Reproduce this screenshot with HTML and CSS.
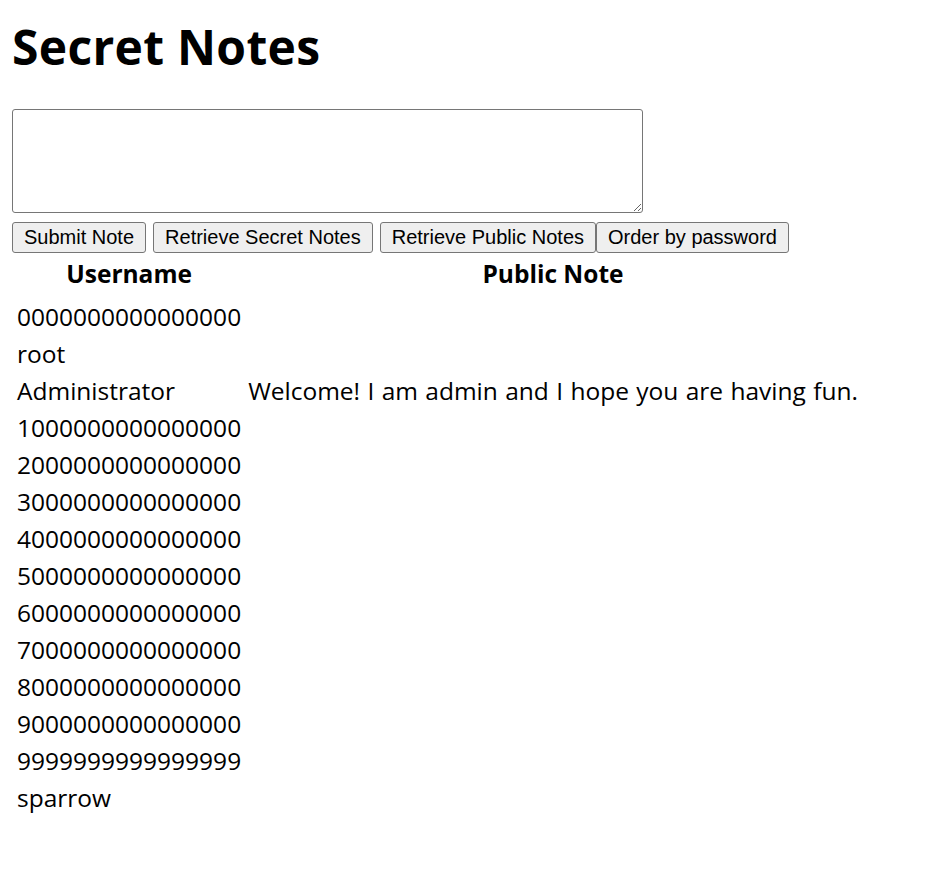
FILE: index.html
```html
<!DOCTYPE html>
<html>
<head>
<meta charset="utf-8">
<title>Secret Notes</title>
<link rel="stylesheet" href="styles.css">
</head>
<body>
<h1 class="title">Secret Notes</h1>
<textarea class="note-input"></textarea>
<div class="actions">
  <button class="btn btn-gap">Submit Note</button>
  <button class="btn btn-gap">Retrieve Secret Notes</button>
  <button class="btn">Retrieve Public Notes</button>
  <button class="btn">Order by password</button>
</div>
<table class="notes">
  <thead>
    <tr><th>Username</th><th>Public Note</th></tr>
  </thead>
  <tbody>
    <tr><td>0000000000000000</td><td></td></tr>
    <tr><td>root</td><td></td></tr>
    <tr><td>Administrator</td><td>Welcome! I am admin and I hope you are having fun.</td></tr>
    <tr><td>1000000000000000</td><td></td></tr>
    <tr><td>2000000000000000</td><td></td></tr>
    <tr><td>3000000000000000</td><td></td></tr>
    <tr><td>4000000000000000</td><td></td></tr>
    <tr><td>5000000000000000</td><td></td></tr>
    <tr><td>6000000000000000</td><td></td></tr>
    <tr><td>7000000000000000</td><td></td></tr>
    <tr><td>8000000000000000</td><td></td></tr>
    <tr><td>9000000000000000</td><td></td></tr>
    <tr><td>9999999999999999</td><td></td></tr>
    <tr><td>sparrow</td><td></td></tr>
  </tbody>
</table>
</body>
</html>
```

FILE: styles.css
```css
html, body {
  background: #ffffff;
}
body {
  margin: 0;
  padding: 12px;
  font-family: "Open Sans", "Noto Sans", sans-serif;
  font-size: 24px;
  color: #000000;
}
.title {
  margin: 3px 0 30px 0;
  font-size: 48px;
  line-height: 64px;
  font-weight: 700;
  letter-spacing: 0.3px;
}
.note-input {
  display: block;
  box-sizing: border-box;
  width: 631px;
  height: 104px;
  margin: 0;
  border: 1px solid #767676;
  border-radius: 3px;
  resize: both;
  background: #ffffff;
}
.actions {
  display: flex;
  margin-top: 9px;
}
.btn {
  box-sizing: border-box;
  height: 31px;
  padding: 0 11px;
  margin: 0;
  font-family: "Liberation Sans", Arial, sans-serif;
  font-size: 20px;
  line-height: 29px;
  color: #000000;
  background: #efefef;
  border: 1px solid #767676;
  border-radius: 3px;
}
.btn-gap {
  margin-right: 7px;
}
.notes {
  margin-top: 2px;
  border-spacing: 3px;
  font-size: 24.5px;
}
.notes th {
  padding: 0 2px 7px 2px;
  line-height: 32px;
  font-weight: 700;
  text-align: center;
}
.notes td {
  padding: 1px 2px;
  line-height: 32px;
  text-align: left;
  word-spacing: 1px;
}
```
